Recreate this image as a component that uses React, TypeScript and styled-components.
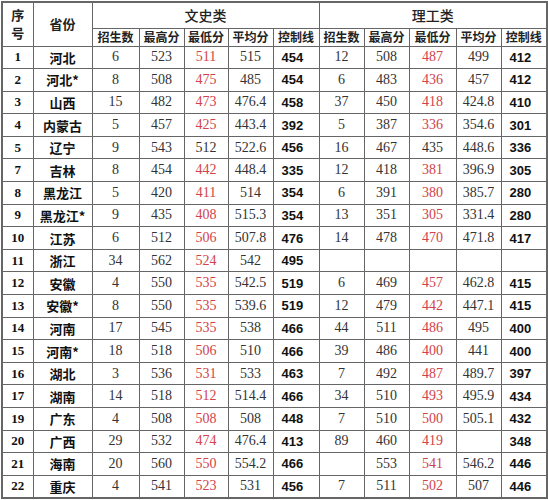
import { ReactElement } from 'react';
import styled, { createGlobalStyle } from 'styled-components';

const GlobalStyle = createGlobalStyle`
  html, body {
    margin: 0;
    padding: 0;
    background: #fff;
  }
`;

const Wrapper = styled.div`
  padding: 1px 0 0 1px;
`;

const Table = styled.table`
  width: 545px;
  table-layout: fixed;
  border-collapse: collapse;
  border: 2px solid #666;
  color: #222;
`;

const HeadCell = styled.th`
  border: 1px solid #666;
  padding: 0;
  font-family: 'Noto Sans CJK SC', sans-serif;
  font-weight: 700;
  font-size: 13px;
  line-height: 18px;
  text-align: center;
  vertical-align: middle;
`;

const GroupCell = styled(HeadCell)`
  font-weight: 500;
  font-size: 14px;
`;

const SubCell = styled(HeadCell)`
  font-size: 12px;
  line-height: 14px;
`;

const GroupRow = styled.tr`
  height: 26px;
`;

const SubRow = styled.tr`
  height: 18px;
`;

const DataRow = styled.tr`
  height: 22.6px;
`;

const Cell = styled.td`
  border: 1px solid #666;
  padding: 0;
  text-align: center;
  vertical-align: middle;
  font-family: 'Liberation Serif', serif;
  font-size: 14px;
  color: #333;
  white-space: nowrap;
`;

const IndexCell = styled(Cell)`
  font-weight: 700;
  font-size: 13px;
  color: #111;
`;

const ProvinceCell = styled(Cell)`
  font-family: 'Noto Sans CJK SC', sans-serif;
  font-weight: 700;
  font-size: 13px;
  color: #111;
`;

const LowCell = styled(Cell)<{ $plain?: boolean }>`
  color: ${(p) => (p.$plain ? '#333' : '#d2424a')};
`;

const LineCell = styled(Cell)`
  text-align: left;
  padding-left: 8px;
  font-family: 'Liberation Sans', sans-serif;
  font-weight: 700;
  font-size: 13px;
  color: #111;
`;

type V = number | string;

interface Group {
  count: V;
  high: V;
  low: V;
  avg: V;
  line: V;
  plainLow?: boolean;
}

interface Row {
  no: number;
  province: string;
  wen: Group;
  li: Group;
}

const g = (count: V, high: V, low: V, avg: V, line: V, plainLow = false): Group => ({
  count,
  high,
  low,
  avg,
  line,
  plainLow,
});

const rows: Row[] = [
  { no: 1, province: '河北', wen: g(6, 523, 511, 515, 454), li: g(12, 508, 487, 499, 412) },
  { no: 2, province: '河北*', wen: g(8, 508, 475, 485, 454), li: g(6, 483, 436, 457, 412) },
  { no: 3, province: '山西', wen: g(15, 482, 473, 476.4, 458), li: g(37, 450, 418, 424.8, 410) },
  { no: 4, province: '内蒙古', wen: g(5, 457, 425, 443.4, 392), li: g(5, 387, 336, 354.6, 301) },
  { no: 5, province: '辽宁', wen: g(9, 543, 512, 522.6, 456, true), li: g(16, 467, 435, 448.6, 336, true) },
  { no: 7, province: '吉林', wen: g(8, 454, 442, 448.4, 335), li: g(12, 418, 381, 396.9, 305) },
  { no: 8, province: '黑龙江', wen: g(5, 420, 411, 514, 354), li: g(6, 391, 380, 385.7, 280) },
  { no: 9, province: '黑龙江*', wen: g(9, 435, 408, 515.3, 354), li: g(13, 351, 305, 331.4, 280) },
  { no: 10, province: '江苏', wen: g(6, 512, 506, 507.8, 476), li: g(14, 478, 470, 471.8, 417) },
  { no: 11, province: '浙江', wen: g(34, 562, 524, 542, 495), li: g('', '', '', '', '') },
  { no: 12, province: '安徽', wen: g(4, 550, 535, 542.5, 519), li: g(6, 469, 457, 462.8, 415) },
  { no: 13, province: '安徽*', wen: g(8, 550, 535, 539.6, 519), li: g(12, 479, 442, 447.1, 415) },
  { no: 14, province: '河南', wen: g(17, 545, 535, 538, 466), li: g(44, 511, 486, 495, 400) },
  { no: 15, province: '河南*', wen: g(18, 518, 506, 510, 466), li: g(39, 486, 400, 441, 400) },
  { no: 16, province: '湖北', wen: g(3, 536, 531, 533, 463), li: g(7, 492, 487, 489.7, 397) },
  { no: 17, province: '湖南', wen: g(14, 518, 512, 514.4, 466), li: g(34, 510, 493, 495.9, 434) },
  { no: 19, province: '广东', wen: g(4, 508, 508, 508, 448), li: g(7, 510, 500, 505.1, 432) },
  { no: 20, province: '广西', wen: g(29, 532, 474, 476.4, 413), li: g(89, 460, 419, '', 348) },
  { no: 21, province: '海南', wen: g(20, 560, 550, 554.2, 466), li: g('', 553, 541, 546.2, 446) },
  { no: 22, province: '重庆', wen: g(4, 541, 523, 531, 456), li: g(7, 511, 502, 507, 446) },
];

const widths = [31, 59, 47, 45, 44, 45, 46, 45, 45, 47, 45, 46];
const subHeads = ['招生数', '最高分', '最低分', '平均分', '控制线'];

function GroupCells({ data }: { data: Group }): ReactElement {
  return (
    <>
      <Cell>{data.count}</Cell>
      <Cell>{data.high}</Cell>
      <LowCell $plain={data.plainLow}>{data.low}</LowCell>
      <Cell>{data.avg}</Cell>
      <LineCell>{data.line}</LineCell>
    </>
  );
}

export default function App(): ReactElement {
  return (
    <Wrapper>
      <GlobalStyle />
      <Table>
        <colgroup>
          {widths.map((w, i) => (
            <col key={i} style={{ width: w }} />
          ))}
        </colgroup>
        <thead>
          <GroupRow>
            <HeadCell rowSpan={2}>
              序<br />号
            </HeadCell>
            <HeadCell rowSpan={2}>省份</HeadCell>
            <GroupCell colSpan={5}>文史类</GroupCell>
            <GroupCell colSpan={5}>理工类</GroupCell>
          </GroupRow>
          <SubRow>
            {subHeads.map((h) => (
              <SubCell key={'w' + h}>{h}</SubCell>
            ))}
            {subHeads.map((h) => (
              <SubCell key={'l' + h}>{h}</SubCell>
            ))}
          </SubRow>
        </thead>
        <tbody>
          {rows.map((r) => (
            <DataRow key={r.no}>
              <IndexCell>{r.no}</IndexCell>
              <ProvinceCell>{r.province}</ProvinceCell>
              <GroupCells data={r.wen} />
              <GroupCells data={r.li} />
            </DataRow>
          ))}
        </tbody>
      </Table>
    </Wrapper>
  );
}
